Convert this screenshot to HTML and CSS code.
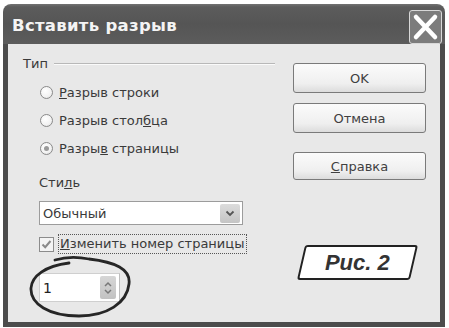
FILE: index.html
```html
<!DOCTYPE html>
<html>
<head>
<meta charset="utf-8">
<link rel="stylesheet" href="styles.css">
</head>
<body>
<div class="window">
  <div class="titlebar">
    <span class="title">Вставить разрыв</span>
    <span class="close">
      <svg width="33" height="34" viewBox="0 0 33 34"><path d="M7 7 L26 27 M26 7 L7 27" stroke="#fff" stroke-width="4.5" stroke-linecap="round"/></svg>
    </span>
  </div>
  <div class="client">
    <div class="left">
      <div class="group-head"><span>Тип</span><span class="rule"></span></div>
      <div class="radios">
        <div class="row"><span class="radio"></span><span><u>Р</u>азрыв строки</span></div>
        <div class="row"><span class="radio"></span><span>Разрыв стол<u>б</u>ца</span></div>
        <div class="row"><span class="radio checked"></span><span>Разры<u>в</u> страницы</span></div>
      </div>
      <div class="label">Сти<u>л</u>ь</div>
      <div class="select"><span class="value">Обычный</span><span class="dropbtn"><svg width="10" height="7" viewBox="0 0 10 7"><path d="M1.5 1.5 L5 5 L8.5 1.5" fill="none" stroke="#555" stroke-width="1.8"/></svg></span></div>
      <div class="checkrow"><span class="checkbox"><svg width="13" height="13" viewBox="0 0 13 13"><path d="M2.5 6.5 L5.2 9.2 L10.5 3" fill="none" stroke="#8a8a8a" stroke-width="2"/></svg></span><span class="focus"><u>И</u>зменить номер страницы</span></div>
      <div class="spin"><span class="value">1</span><span class="spinbtn"><svg width="12" height="20" viewBox="0 0 12 20"><path d="M3 8 L6 5 L9 8 M3 12 L6 15 L9 12" fill="none" stroke="#777" stroke-width="1.5"/></svg></span></div>
    </div>
    <div class="right">
      <div class="btn b-ok">OK</div>
      <div class="btn b-cancel">Отмена</div>
      <div class="btn b-help"><u>С</u>правка</div>
      <div class="badge"><span>Рис. 2</span></div>
    </div>
    <svg class="loop" width="110" height="68" viewBox="0 0 110 68"><path d="M28 6 C 38 3 52 3 62 5 C 88 8 104 15 102 30 C 100 49 80 62 52 62 C 22 62 3 50 4 34 C 5 22 18 12 42 9" fill="none" stroke="#262626" stroke-width="2.8" stroke-linecap="round"/></svg>
  </div>
</div>
</body>
</html>
```
FILE: styles.css
```css
html, body {
  margin: 0;
  padding: 0;
  background: #fff;
}
body {
  width: 449px;
  height: 328px;
  overflow: hidden;
  font-family: "DejaVu Sans", Verdana, sans-serif;
  font-size: 13px;
  color: #3a3a3a;
}
u {
  text-decoration: underline;
  text-underline-offset: 1px;
}
.window {
  margin: 4px 0 0 3px;
  width: 442px;
  height: 323px;
  display: flex;
  flex-direction: column;
}
.titlebar {
  height: 40px;
  flex: none;
  border-radius: 8px 8px 0 0;
  background: linear-gradient(#727272 0, #5c5c5c 3px, #555 50%, #5c5c5c 100%);
  display: flex;
  align-items: center;
  justify-content: space-between;
  padding: 0 3px 0 9px;
  box-sizing: border-box;
}
.title {
  font-family: "DejaVu Sans", Verdana, sans-serif;
  font-weight: bold;
  font-size: 16.5px;
  color: #f4f4f4;
  letter-spacing: 0.3px;
  padding-top: 2px;
}
.close {
  width: 33px;
  height: 34px;
  box-sizing: border-box;
  border: 1px solid #d8d8d8;
  border-radius: 3px;
  background: #7c7c7c;
  display: flex;
  align-items: center;
  justify-content: center;
  margin-top: 5px;
}
.close svg { display: block; margin: -1px; }
.client {
  position: relative;
  flex: 1;
  background: #e8e8e8;
  border: 5px solid #4c4c4c;
  border-top: 0;
  display: flex;
  padding: 12px 0 0 15px;
}
.left {
  width: 252px;
  display: flex;
  flex-direction: column;
}
.group-head {
  height: 14px;
  display: flex;
  align-items: center;
  gap: 6px;
}
.rule {
  flex: 1;
  height: 0;
  border-top: 1px solid #b8b8b8;
  border-bottom: 1px solid #fafafa;
  margin-top: 1px;
}
.radios {
  margin-top: 8px;
  padding-left: 17px;
}
.row {
  height: 28px;
  display: flex;
  align-items: center;
  gap: 6px;
}
.radio {
  width: 11px;
  height: 11px;
  border: 1px solid #8a8a8a;
  border-radius: 50%;
  background: radial-gradient(circle at 40% 35%, #fff 0, #f2f2f2 60%, #d8d8d8 100%);
  flex: none;
  position: relative;
}
.radio.checked::after {
  content: "";
  position: absolute;
  left: 3px;
  top: 3px;
  width: 5px;
  height: 5px;
  border-radius: 50%;
  background: #9a9a9a;
}
.label {
  margin-top: 12px;
  padding-left: 16px;
  height: 18px;
  line-height: 18px;
}
.select {
  margin: 9px 0 0 16px;
  width: 204px;
  height: 24px;
  box-sizing: border-box;
  border: 1px solid #9c9c9c;
  background: #fff;
  display: flex;
  align-items: center;
  justify-content: space-between;
  padding: 0 2px 0 3px;
}
.dropbtn {
  width: 20px;
  height: 19px;
  background: linear-gradient(#dcdcdc, #c4c4c4);
  border-radius: 2px;
  display: flex;
  align-items: center;
  justify-content: center;
}
.checkrow {
  margin: 9px 0 0 16px;
  height: 20px;
  display: flex;
  align-items: center;
  gap: 4px;
}
.checkbox {
  width: 13px;
  height: 13px;
  border: 1px solid #8c8c8c;
  background: #f4f4f4;
  flex: none;
}
.checkbox svg { display: block; }
.focus {
  border: 1px dotted #555;
  padding: 1px 2px 2px 1px;
  line-height: 15px;
}
.spin {
  margin: 19px 0 0 16px;
  width: 81px;
  height: 29px;
  box-sizing: border-box;
  border: 1px solid #cfcfcf;
  border-right-color: #bdbdbd;
  background: #fff;
  display: flex;
  align-items: center;
  justify-content: space-between;
  padding: 0 3px 0 3px;
  font-size: 14px;
  color: #222;
}
.spinbtn {
  width: 16px;
  height: 23px;
  background: linear-gradient(#d6d6d6, #c2c2c2);
  border-radius: 2px;
  display: flex;
  align-items: center;
  justify-content: center;
}
.right {
  margin-left: 18px;
  padding-top: 7px;
  display: flex;
  flex-direction: column;
}
.btn {
  width: 133px;
  height: 30px;
  box-sizing: border-box;
  border: 1px solid #7a7a7a;
  border-radius: 3px;
  background: linear-gradient(#fbfbfb, #efefef 70%, #dcdcdc);
  display: flex;
  align-items: center;
  justify-content: center;
  color: #404040;
}
.b-cancel { margin-top: 10px; }
.b-help { margin-top: 19px; height: 28px; }
.badge {
  margin: 65px 0 0 8px;
  width: 113px;
  height: 35px;
  box-sizing: border-box;
  border: 2px solid #222;
  border-radius: 3px;
  background: #fff;
  transform: skewX(-13deg);
  display: flex;
  align-items: center;
  justify-content: center;
}
.badge span {
  transform: skewX(13deg);
  font-family: "Liberation Sans", Arial, sans-serif;
  font-weight: bold;
  font-style: italic;
  font-size: 22px;
  color: #333;
}
.loop {
  position: absolute;
  left: 19px;
  top: 210px;
}
```
